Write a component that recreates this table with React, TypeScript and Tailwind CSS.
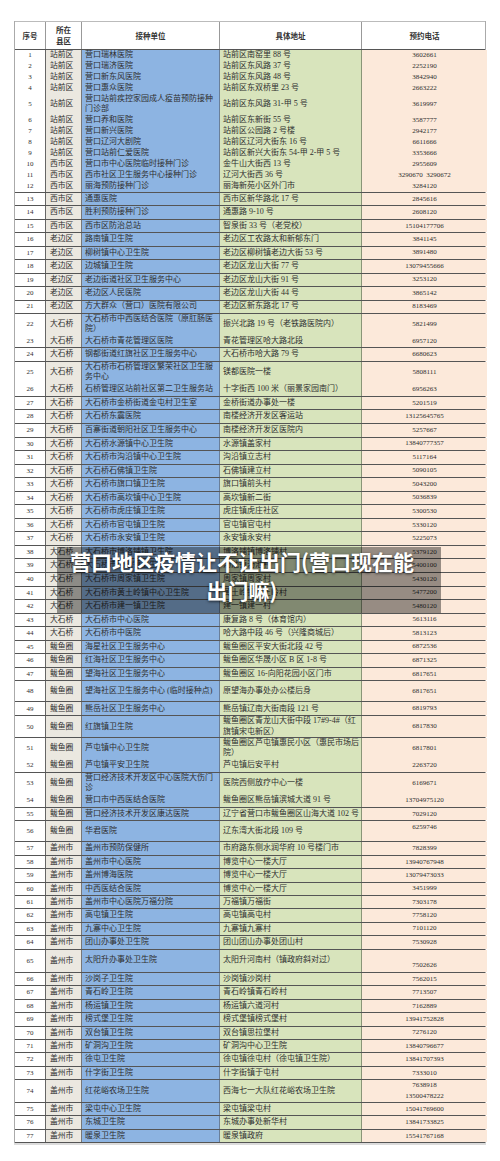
import React from "react";

// 序号, 接种单位, 具体地址, 预约电话  (县区 comes from the number range)
const rows: [number, string, string, string][] = [
  [1, "营口瑞林医院", "站前区南窑里 88 号", "3602661"],
  [2, "营口瑞济医院", "站前区东风路 37 号", "2252190"],
  [3, "营口新东风医院", "站前区东风路 48 号", "3842940"],
  [4, "营口惠众医院", "站前区东双桥里 23 号", "2663222"],
  [5, "营口站前疾控家园成人疫苗预防接种\n门诊部", "站前区东风路 31-甲 5 号", "3619997"],
  [6, "营口养和医院", "站前区东新街 55 号", "3587777"],
  [7, "营口新兴医院", "站前区公园路 2 号楼", "2942177"],
  [8, "营口辽河大剧院", "站前区辽河大街东 16 号", "6611666"],
  [9, "营口站前仁爱医院", "站前区新兴大街东 54-甲 2-甲 5 号", "3353666"],
  [10, "营口市中心医院临时接种门诊", "金牛山大街西 13 号", "2955609"],
  [11, "西市社区卫生服务中心接种门诊", "辽河大街西 36 号", "3290670  3290672"],
  [12, "丽海预防接种门诊", "丽海新苑小区外门市", "3284120"],
  [13, "通惠医院", "西市区新华路北 17 号", "2845616"],
  [14, "胜利预防接种门诊", "通惠路 9-10 号", "2608120"],
  [15, "西市区防治总站", "智泉街 33 号（老党校）", "15104177706"],
  [16, "路南镇卫生院", "老边区工农路太和新郁东门", "3841145"],
  [17, "柳树镇中心卫生院", "老边区柳树镇老边大街 53 号", "3891480"],
  [18, "边城镇卫生院", "老边区龙山大街 77 号", "13079455666"],
  [19, "老边街道社区卫生服务中心", "老边区龙山大街 91 号", "3253120"],
  [20, "老边区人民医院", "老边区龙山大街 44 号", "3865142"],
  [21, "方大群众（营口）医院有限公司", "老边区新东路北 17 号", "8183469"],
  [22, "大石桥市中西医结合医院（原肛肠医\n院）", "振兴北路 19 号（老铁路医院内）", "5821499"],
  [23, "大石桥市青花管理区医院", "青花管理区哈大路北段", "6957120"],
  [24, "钢都街道红旗社区卫生服务中心", "大石桥市哈大路 79 号", "6680623"],
  [25, "大石桥市石桥管理区繁荣社区卫生服\n务中心", "镁都医院一楼", "5808111"],
  [26, "石桥管理区站前社区第二卫生服务站", "十字街西 100 米（丽景家园南门）", "6956263"],
  [27, "大石桥市金桥街道金屯村卫生室", "金桥街道办事处一楼", "5201519"],
  [28, "大石桥东震医院", "南楼经济开发区客运站", "13125645765"],
  [29, "百寨街道朝阳社区卫生服务中心", "南楼经济开发区医院内", "5257667"],
  [30, "大石桥水源镇中心卫生院", "水源镇盖家村", "13840777357"],
  [31, "大石桥市沟沿镇中心卫生院", "沟沿镇立志村", "5117164"],
  [32, "大石桥石佛镇卫生院", "石佛镇建立村", "5090105"],
  [33, "大石桥市旗口镇卫生院", "旗口镇前头村", "5043200"],
  [34, "大石桥市高坎镇中心卫生院", "高坎镇新二街", "5036839"],
  [35, "大石桥市虎庄镇卫生院", "虎庄镇虎庄社区", "5300530"],
  [36, "大石桥市官屯镇卫生院", "官屯镇官屯村", "5330120"],
  [37, "大石桥市永安镇卫生院", "永安镇永安村", "5225073"],
  [38, "大石桥市博洛铺镇卫生院", "博洛铺镇博洛铺村", "5379120"],
  [39, "大石桥市汤池镇卫生院", "汤池镇汤池村", "5400100"],
  [40, "大石桥市周家镇卫生院", "周家镇周家村", "5430120"],
  [41, "大石桥市黄土岭镇中心卫生院", "黄土岭镇黄土岭村", "5477200"],
  [42, "大石桥市建一镇卫生院", "建一镇建一村", "5480120"],
  [43, "大石桥市中心医院", "康复路 8 号（体育馆内）", "5613116"],
  [44, "大石桥市中医院", "哈大路中段 46 号（兴隆商城后）", "5813123"],
  [45, "海星社区卫生服务中心", "鲅鱼圈区平安大街北段 42 号", "6872536"],
  [46, "红海社区卫生服务中心", "鲅鱼圈区华晟小区 B 区 1-8 号", "6871325"],
  [47, "望海社区卫生服务中心", "鲅鱼圈区 16-向阳花园小区门市", "6817651"],
  [48, "望海社区卫生服务中心 (临时接种点)", "原望海办事处办公楼后身", "6817651"],
  [49, "熊岳社区卫生服务中心", "熊岳镇辽南大街南段 121 号", "6819793"],
  [50, "红旗镇卫生院", "鲅鱼圈区青龙山大街中段 17#9-4#（红\n旗镇宋屯新区）", "6817830"],
  [51, "芦屯镇中心卫生院", "鲅鱼圈区芦屯镇惠民小区（惠民市场后\n院）", "6817801"],
  [52, "芦屯镇平安卫生院", "芦屯镇后安平村", "2263720"],
  [53, "营口经济技术开发区中心医院大伤门\n诊", "医院西侧放疗中心一楼", "6169671"],
  [54, "营口市中西医结合医院", "鲅鱼圈区熊岳镇滨城大道 91 号", "13704975120"],
  [55, "营口经济技术开发区康达医院", "辽宁省营口市鲅鱼圈区山海大道 102 号", "7029120"],
  [56, "华君医院", "辽东湾大街北段 109 号", "6259746"],
  [57, "盖州市预防保健所", "市府路东侧水润华府 10 号楼门市", "7828399"],
  [58, "盖州市中心医院", "博览中心一楼大厅", "13940767948"],
  [59, "盖州博海医院", "博览中心一楼大厅", "13079473033"],
  [60, "中西医结合医院", "博览中心一楼大厅", "3451999"],
  [61, "盖州市中心医院万福分院", "万福镇万福街", "7303178"],
  [62, "高屯镇卫生院", "高屯镇高屯村", "7758120"],
  [63, "九寨中心卫生院", "九寨镇九寨村", "7101120"],
  [64, "团山办事处卫生院", "团山团山办事处团山村", "7530928"],
  [65, "太阳升办事处卫生院", "太阳升河南村（镇政府斜对过）", "7502626"],
  [66, "沙岗子卫生院", "沙岗镇沙岗村", "7562015"],
  [67, "青石岭卫生院", "青石岭镇青石岭村", "7713507"],
  [68, "杨运镇卫生院", "杨运镇六道河村", "7162889"],
  [69, "榜式堡卫生院", "榜式堡镇榜式堡村", "13941752828"],
  [70, "双台镇卫生院", "双台镇思拉堡村", "7276120"],
  [71, "矿洞沟卫生院", "矿洞沟中心卫生院", "13840796677"],
  [72, "徐屯卫生院", "徐屯镇徐屯村（徐屯镇卫生院）", "13841707393"],
  [73, "什字街卫生院", "什字街镇于屯村", "7333010"],
  [74, "红花峪农场卫生院", "西海七一大队红花峪农场卫生院", "7638918\n13500478222"],
  [75, "梁屯中心卫生院", "梁屯镇梁屯村", "15041769600"],
  [76, "东城卫生院", "东城办事处新华村", "13841733825"],
  [77, "暖泉卫生院", "暖泉镇政府", "15541767168"],
];

function district(n: number) {
  if (n <= 9) return "站前区";
  if (n <= 15) return "西市区";
  if (n <= 21) return "老边区";
  if (n <= 44) return "大石桥";
  if (n <= 56) return "鲅鱼圈";
  return "盖州市";
}

// row heights follow the scan, which is not uniform
function rowH(n: number) {
  if (n <= 4) return "h-[11px]";
  if (n === 5) return "h-[21px]";
  if (n <= 11) return "h-[11px]";
  if (n === 12) return "h-[12.5px]";
  if (n <= 21) return "h-[13.45px]";
  if (n === 22) return "h-[21px]";
  if (n <= 24) return "h-[13.45px]";
  if (n === 25) return "h-[21.5px]";
  if (n <= 47) return "h-[13.55px]";
  if (n === 48 || n === 51) return "h-[21px]";
  if (n === 50 || n === 53) return "h-[21.5px]";
  if (n === 49 || n === 52 || n === 57) return "h-[14px]";
  if (n <= 55) return "h-[13.5px]";
  if (n === 56) return "h-[20.5px]";
  if (n === 65) return "h-[23.5px]";
  if (n === 74) return "h-[22.5px]";
  if (n <= 73) return "h-[13.4px]";
  return "h-[13.6px]";
}

const cjk = "[font-family:'Liberation_Serif','Noto_Sans_CJK_SC',serif]";
const serif = "[font-family:'Liberation_Serif',serif]";
const cols = "grid grid-cols-[31px_36px_138px_142px_125px]";

function Header() {
  return (
    <div className={`${cols} h-[28.5px] border-t border-b border-t-[#bbb] border-b-[#555] bg-white text-[7.5px] font-bold text-[#333] [font-family:'Noto_Sans_CJK_SC',sans-serif]`}>
      <div className="flex items-center justify-center border-r border-[#999]">序号</div>
      <div className="flex flex-col items-center justify-center border-r border-[#999] leading-[11px]">
        <span>所在</span>
        <span>县区</span>
      </div>
      <div className="flex items-center justify-center border-r border-[#999]">接种单位</div>
      <div className="flex items-center justify-center border-r border-[#999]">具体地址</div>
      <div className="flex items-center justify-center">预约电话</div>
    </div>
  );
}

function TableRow({ r }: { r: [number, string, string, string] }) {
  const [n, unit, addr, phone] = r;
  const top65 = n === 65 ? "items-start pt-[5px]" : "items-center";
  const phoneAlign = n === 56 ? "items-start pt-[1px]" : n === 65 ? "items-end pb-[1px]" : "items-center";
  return (
    <div className={`${cols} ${rowH(n)} border-b border-[#555] text-[#2f2f2f] whitespace-pre leading-[10.5px]`}>
      <div className={`flex items-center justify-center border-r border-[#666] bg-white text-[7px] ${serif}`}>{n}</div>
      <div className={`flex items-center border-r border-[#777] bg-[#ebe8e0] pl-[4px] text-[7.8px] ${cjk}`}>{district(n)}</div>
      <div className={`flex ${top65} border-r border-[#6a7f99] bg-[#8db4e2] pl-[3px] text-[8px] ${cjk}`}>{unit}</div>
      <div className={`flex ${top65} border-r border-[#8a9578] bg-[#d8e4bc] pl-[3px] text-[8px] ${cjk}`}>{addr}</div>
      <div className={`flex ${phoneAlign} justify-center bg-[#fce9da] text-center text-[7px] leading-[11px] ${serif}`}>{phone}</div>
    </div>
  );
}

export default function App() {
  return (
    <div className="relative h-[1161px] w-[500px] overflow-hidden bg-white">
      <div className="ml-[14px] mt-[21px] w-[472px] border-x border-[#aaa]">
        <Header />
        {rows.map((r) => (
          <TableRow key={r[0]} r={r} />
        ))}
      </div>
      <div className="ml-[14px] h-[2px] w-[472px] bg-[#dcdcdc]" />

      {/* caption laid over the table */}
      <div className="absolute left-[57px] top-[547px] flex h-[66px] w-[384px] flex-col items-center bg-black/40 pr-[14px] text-[21px] font-bold leading-[29px] text-white [font-family:'Noto_Sans_CJK_SC',sans-serif] [text-shadow:0_1px_3px_rgba(0,0,0,0.7)]">
        <span>营口地区疫情让不让出门(营口现在能</span>
        <span>出门嘛)</span>
      </div>
    </div>
  );
}
